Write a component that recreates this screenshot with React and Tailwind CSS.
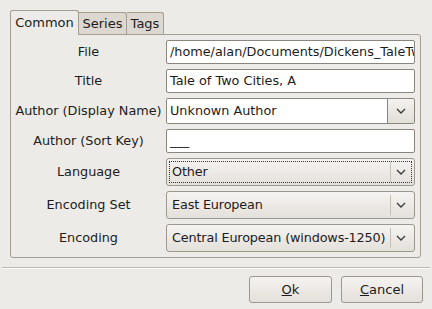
import React from "react";

const Chevron = () => (
  <svg width="10" height="6" viewBox="0 0 10 6" className="block">
    <path d="M1 1 L5 5 L9 1" fill="none" stroke="#3a3a3a" strokeWidth="1.3" />
  </svg>
);

function Label({ children }) {
  return (
    <div className="w-[155px] shrink-0 text-center text-[12.8px] text-[#1c1c1c]">
      {children}
    </div>
  );
}

function Entry({ value, h = "h-[24px]" }) {
  return (
    <div
      className={`w-[249px] ${h} flex items-center px-[3px] bg-white border border-[#8a857d] rounded-[2px] overflow-hidden whitespace-nowrap text-[12.8px] text-[#1c1c1c]`}
    >
      {value}
    </div>
  );
}

function ComboEntry({ value }) {
  return (
    <div className="w-[249px] h-[26px] flex border border-[#8a857d] rounded-[2px] overflow-hidden">
      <div className="flex-1 bg-white flex items-center px-[3px] text-[12.8px] text-[#1c1c1c]">
        {value}
      </div>
      <div className="w-[27px] border-l border-[#8a857d] bg-gradient-to-b from-[#f4f2ef] to-[#e2ded8] flex items-center justify-center">
        <Chevron />
      </div>
    </div>
  );
}

function Combo({ value, focused }) {
  return (
    <div className="w-[249px] h-[28px] p-[2px] flex border border-[#9c978f] rounded-[3px] bg-gradient-to-b from-[#f5f3f1] to-[#e4e0db]">
      <div
        className={`flex-1 flex border ${focused ? "border-dotted border-[#333]" : "border-transparent"}`}
      >
        <div className="flex-1 flex items-center pl-[2px] text-[12.8px] tracking-[-0.15px] text-[#1c1c1c] whitespace-nowrap overflow-hidden">
          {value}
        </div>
        <div className="w-[21px] shrink-0 border-l border-[#c4bfb8] flex items-center justify-center">
          <Chevron />
        </div>
      </div>
    </div>
  );
}

export default function App() {
  return (
    <div
      className="w-[432px] h-[309px] bg-[#edebe7] text-[#1c1c1c] relative overflow-hidden"
      style={{ fontFamily: '"DejaVu Sans", sans-serif' }}
    >
      <div className="pt-[10px] pl-[10px] flex items-end">
        <div className="w-[69px] h-[25px] border border-b-0 border-[#a49d94] rounded-t-[3px] bg-[#edebe7] flex items-center justify-center text-[13px] relative z-10 -mb-px">
          Common
        </div>
        <div className="w-[48px] h-[22px] border border-l-0 border-b-0 border-[#a49d94] rounded-tr-[3px] bg-[#dcd7d0] flex items-center justify-center text-[13px]">
          Series
        </div>
        <div className="w-[37px] h-[22px] border border-l-0 border-b-0 border-[#a49d94] rounded-tr-[3px] bg-[#dcd7d0] flex items-center justify-center text-[13px]">
          Tags
        </div>
      </div>

      <div className="ml-[10px] w-[411px] h-[224px] border border-[#a49d94] rounded-b-[3px] rounded-tr-[3px] pt-[5px] flex flex-col gap-[5px]">
        <div className="flex items-center">
          <Label>File</Label>
          <Entry value="/home/alan/Documents/Dickens_TaleTwoCities.epub" />
        </div>
        <div className="flex items-center">
          <Label>Title</Label>
          <Entry value="Tale of Two Cities, A" />
        </div>
        <div className="flex items-center">
          <Label>Author (Display Name)</Label>
          <ComboEntry value="Unknown Author" />
        </div>
        <div className="flex items-center">
          <Label>Author (Sort Key)</Label>
          <Entry value="___" />
        </div>
        <div className="flex items-center">
          <Label>Language</Label>
          <Combo value="Other" focused />
        </div>
        <div className="flex items-center">
          <Label>Encoding Set</Label>
          <Combo value="East European" />
        </div>
        <div className="flex items-center">
          <Label>Encoding</Label>
          <Combo value="Central European (windows-1250)" />
        </div>
      </div>

      <div className="mt-[9px] mx-[2px] h-[2px] border-t border-[#bdb8b0] border-b border-b-white" />

      <div className="mt-[7px] flex justify-end gap-[9px] pr-[9px]">
        <button className="w-[83px] h-[27px] border border-[#9c978f] rounded-[3px] bg-gradient-to-b from-[#f5f3f1] to-[#e4e0db] text-[13px]">
          <span className="underline">O</span>k
        </button>
        <button className="w-[82px] h-[27px] border border-[#9c978f] rounded-[3px] bg-gradient-to-b from-[#f5f3f1] to-[#e4e0db] text-[13px]">
          <span className="underline">C</span>ancel
        </button>
      </div>
    </div>
  );
}
